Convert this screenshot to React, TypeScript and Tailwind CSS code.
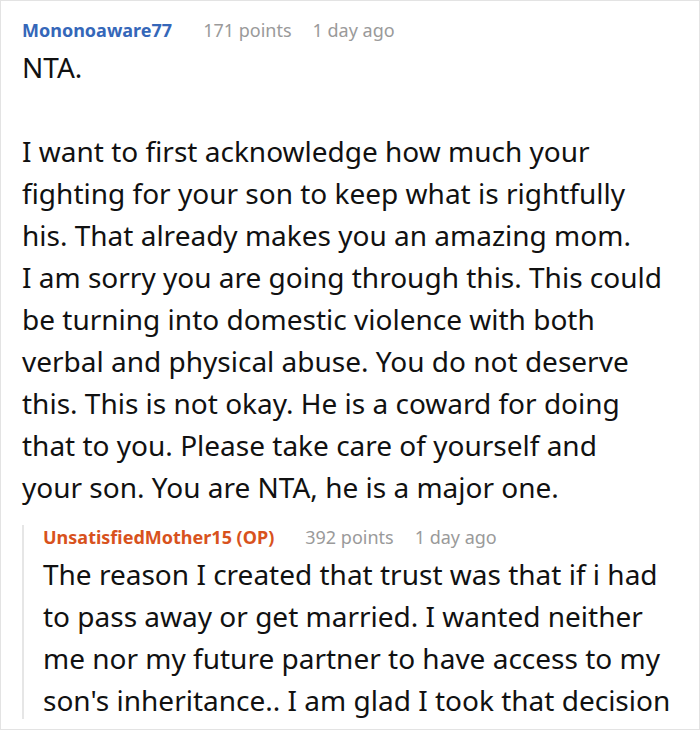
type CommentMetaProps = {
  author: string;
  points: number;
  age: string;
  op?: boolean;
};

function CommentMeta({ author, points, age, op }: CommentMetaProps) {
  return (
    <div className="mb-[3px] flex items-baseline whitespace-nowrap text-[18px] leading-[25px]">
      <span
        className={`font-bold ${op ? "text-[#d8521d]" : "text-[#3567b9]"}`}
      >
        {author}
        {op && " (OP)"}
      </span>
      <span className="ml-[31px] text-[#9a9a9a]">{points} points</span>
      <span className="ml-[21px] text-[#9a9a9a]">{age}</span>
    </div>
  );
}

// line breaks follow the original layout
const FIRST_LINES = [
  "I want to first acknowledge how much your",
  "fighting for your son to keep what is rightfully",
  "his. That already makes you an amazing mom.",
  "I am sorry you are going through this. This could",
  "be turning into domestic violence with both",
  "verbal and physical abuse. You do not deserve",
  "this. This is not okay. He is a coward for doing",
  "that to you. Please take care of yourself and",
  "your son. You are NTA, he is a major one.",
];

const REPLY_LINES = [
  "The reason I created that trust was that if i had",
  "to pass away or get married. I wanted neither",
  "me nor my future partner to have access to my",
  "son's inheritance.. I am glad I took that decision",
];

export default function App() {
  return (
    <div
      className="h-[730px] w-[700px] overflow-hidden border border-[#e3e3e3] bg-white text-[#111]"
      style={{ fontFamily: '"Noto Sans", "Open Sans", sans-serif' }}
    >
      <div className="h-[718px] overflow-hidden pl-[21px] pr-[20px] pt-[17px]">
        <CommentMeta author="Mononoaware77" points={171} age="1 day ago" />
        <div className="whitespace-nowrap text-[28px] leading-[42px]">
          <p>NTA.</p>
          <p>&nbsp;</p>
          <p>
            {FIRST_LINES.map((line, i) => (
              <span key={i} className="block">
                {line}
              </span>
            ))}
          </p>
        </div>

        <div className="mt-[17px] border-l-2 border-[#e6e6e6] pl-[19px]">
          <CommentMeta
            author="UnsatisfiedMother15"
            op
            points={392}
            age="1 day ago"
          />
          <p className="whitespace-nowrap text-[28px] leading-[42px]">
            {REPLY_LINES.map((line, i) => (
              <span key={i} className="block">
                {line}
              </span>
            ))}
          </p>
        </div>
      </div>
    </div>
  );
}
